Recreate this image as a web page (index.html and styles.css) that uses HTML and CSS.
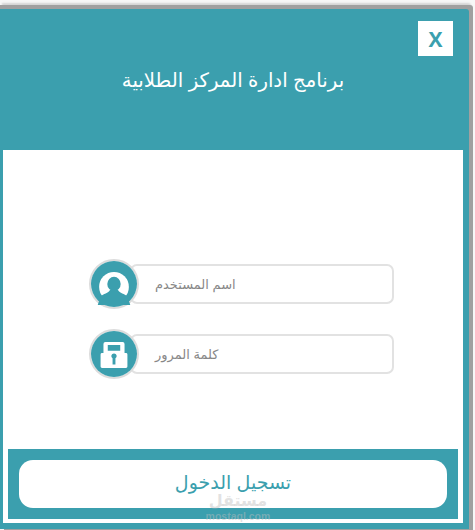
FILE: index.html
```html
<!DOCTYPE html>
<html lang="ar" dir="rtl">
<head>
<meta charset="utf-8">
<title>برنامج ادارة المركز الطلابية</title>
<link rel="stylesheet" href="styles.css">
</head>
<body>
<main class="window">
  <header class="head">
    <button class="close" type="button">X</button>
    <h1 class="title">برنامج ادارة المركز الطلابية</h1>
  </header>
  <section class="panel">
    <form class="form">
      <div class="field">
        <span class="field-text">اسم المستخدم</span>
        <span class="badge">
          <svg viewBox="0 0 48 48" width="46" height="46" aria-hidden="true">
            <circle cx="24" cy="24" r="24" fill="#3b9fae"/>
            <circle cx="24" cy="27" r="15.500" fill="#fff"/>
            <ellipse cx="24" cy="24" rx="7" ry="7.500" fill="#3b9fae"/>
            <path fill="#3b9fae" d="M7 46 10 37C13 34 18 34 20 30H28C30 34 35 34 38 37L41 46Z"/>
          </svg>
        </span>
      </div>
      <div class="field">
        <span class="field-text">كلمة المرور</span>
        <span class="badge">
          <svg viewBox="0 0 48 48" width="46" height="46" aria-hidden="true">
            <circle cx="24" cy="24" r="24" fill="#3b9fae"/>
            <path fill="#fff" fill-rule="evenodd" d="M13 23V13.500A2 2 0 0 1 15 11.500H33A2 2 0 0 1 35 13.500V23H36.500A1.500 1.500 0 0 1 38 24.500V37A1.500 1.500 0 0 1 36.500 38.500H11.500A1.500 1.500 0 0 1 10 37V24.500A1.500 1.500 0 0 1 11.500 23ZM17.500 14.500V20.500H30.500V14.500ZM24 23.500A2.700 2.700 0 0 0 22.500 28.500V35H25.500V28.500A2.700 2.700 0 0 0 24 23.500Z"/>
          </svg>
        </span>
      </div>
    </form>
    <footer class="foot">
      <button class="login" type="button">تسجيل الدخول</button>
    </footer>
  </section>
</main>
<div class="mark">
  <span class="mark-ar">مستقل</span>
  <span class="mark-en">mostaql.com</span>
</div>
</body>
</html>
```
FILE: styles.css
```css
* { box-sizing: border-box; }
html, body { margin: 0; padding: 0; }
body {
  width: 475px;
  height: 530px;
  overflow: hidden;
  background: #f7f7f7;
  position: relative;
  padding-top: 9px;
  font-family: "Liberation Sans", "DejaVu Sans", sans-serif;
}
.window {
  width: 469px;
  height: 520px;
  margin-left: auto;
  margin-right: 6px;
  background: #3b9fae;
  border-top-right-radius: 3px;
  box-shadow: 4px 1px 0 0 #a0a0a0, 4px -4px 0 0 #a0a0a0, 0 -4px 0 0 #a0a0a0, 2px -6px 2px 0 #d4d4d4;
  display: flex;
  flex-direction: column;
  padding: 0 6px 6px 3px;
}
.head {
  height: 141px;
  flex: none;
  display: flex;
  justify-content: center;
  padding-top: 58px;
  position: relative;
}
.close {
  position: absolute;
  top: 12px;
  right: 10px;
  width: 35px;
  height: 35px;
  background: #fff;
  border: 0;
  padding: 0;
  color: #3b9fae;
  font: bold 21px "Open Sans", "Liberation Sans", sans-serif;
}
.title {
  margin: 0;
  color: #fff;
  font-size: 19.700px;
  font-weight: 400;
  line-height: 26px;
}
.panel {
  flex: 1;
  background: #fff;
  display: flex;
  flex-direction: column;
  padding: 0 5px 4px;
}
.form {
  flex: 1;
  display: flex;
  flex-direction: column;
  gap: 30px;
  padding: 114px 64px 0 0;
}
.field {
  width: 305px;
  height: 40px;
  display: flex;
  align-items: center;
  position: relative;
}
.field-text {
  flex: none;
  width: 264px;
  height: 40px;
  background: #fff;
  border: 2px solid #e2e2e2;
  border-radius: 7px;
  color: #888;
  font-size: 13px;
  line-height: 38px;
  text-align: left;
  padding-left: 23px;
}
.badge {
  position: absolute;
  left: 0;
  top: -5px;
  width: 50px;
  height: 50px;
  border-radius: 50%;
  background: #fff;
  border: 2px solid #dcdcdc;
  display: flex;
}
.foot {
  height: 70px;
  flex: none;
  background: #3b9fae;
  padding: 11px;
}
.login {
  display: block;
  width: 100%;
  height: 48px;
  border: 0;
  border-radius: 14px;
  background: #fff;
  color: #3b9fae;
  font: 400 19px "Liberation Sans", "DejaVu Sans", sans-serif;
  padding: 0 0 3px;
}
.mark {
  position: absolute;
  left: 208px;
  top: 491px;
  width: 60px;
  display: flex;
  flex-direction: column;
  align-items: center;
  color: rgba(190, 190, 190, .45);
  font-weight: 700;
}
.mark-ar { font-size: 16px; line-height: 19px; }
.mark-en { font-size: 10.500px; line-height: 12px; }
```
